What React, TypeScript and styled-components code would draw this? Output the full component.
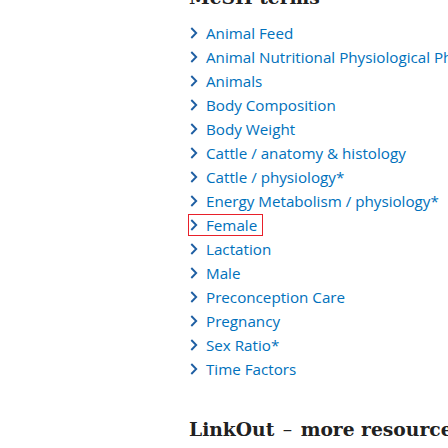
import React from 'react'
import styled, { createGlobalStyle } from 'styled-components'

const terms = [
  'Animal Feed',
  'Animal Nutritional Physiological Phenomena',
  'Animals',
  'Body Composition',
  'Body Weight',
  'Cattle / anatomy & histology',
  'Cattle / physiology*',
  'Energy Metabolism / physiology*',
  'Female',
  'Lactation',
  'Male',
  'Preconception Care',
  'Pregnancy',
  'Sex Ratio*',
  'Time Factors',
]

const Chevron = () => (
  <ChevronIcon width="8" height="12" viewBox="0 0 8 12" aria-hidden="true">
    <path d="M1.3 1 L6.2 6 L1.3 11" fill="none" stroke="currentColor" strokeWidth="1.9" />
  </ChevronIcon>
)

const App: React.FC = () => {
  return (
    <Page>
      <GlobalStyle />
      <Content>
        <Section>
          <SectionTitle $top="-15px">MeSH terms</SectionTitle>
          <TermList>
            {terms.map((term) => (
              <TermItem key={term}>
                <TermLink href="#" $focused={term === 'Female'}>
                  <Chevron />
                  <span>{term}</span>
                </TermLink>
              </TermItem>
            ))}
          </TermList>
        </Section>
        <Section>
          <SectionTitle $top="36px">
            LinkOut <Dash>–</Dash> more resources
          </SectionTitle>
        </Section>
      </Content>
    </Page>
  )
}

const GlobalStyle = createGlobalStyle`
  html, body {
    margin: 0;
    padding: 0;
    background: #ffffff;
    overflow: hidden;
  }
`

const Page = styled.div`
  width: 448px;
  height: 448px;
  overflow: hidden;
  background: #ffffff;
`

const Content = styled.main`
  padding-left: 189px;
  white-space: nowrap;
`

const Section = styled.section`
  display: flex;
  flex-direction: column;
`

const SectionTitle = styled.h2<{ $top: string }>`
  margin: ${(p) => p.$top} 0 0;
  font-family: 'DejaVu Serif', 'Liberation Serif', serif;
  font-weight: 700;
  font-size: 18.7px;
  line-height: 24px;
  color: #212121;
`

// the dash in the reference sits wider than DejaVu's en dash
const Dash = styled.span`
  display: inline-block;
  margin: 0 2px;
  font-weight: 400;
`

const TermList = styled.ul`
  list-style: none;
  margin: 12px 0 0;
  padding: 0;
`

const TermItem = styled.li`
  height: 24px;
  display: flex;
  align-items: center;
`

const TermLink = styled.a<{ $focused?: boolean }>`
  display: inline-flex;
  align-items: center;
  gap: 8px;
  height: 20px;
  padding: 0 5px 0 1px;
  margin-left: -1px;
  border: 1px solid ${(p) => (p.$focused ? '#e8202a' : 'transparent')};
  color: #0071bc;
  text-decoration: none;
  font-family: 'Open Sans', 'Noto Sans', sans-serif;
  font-size: 15.2px;
`

const ChevronIcon = styled.svg`
  flex: none;
  color: #1f5fa3;
`

export default App
